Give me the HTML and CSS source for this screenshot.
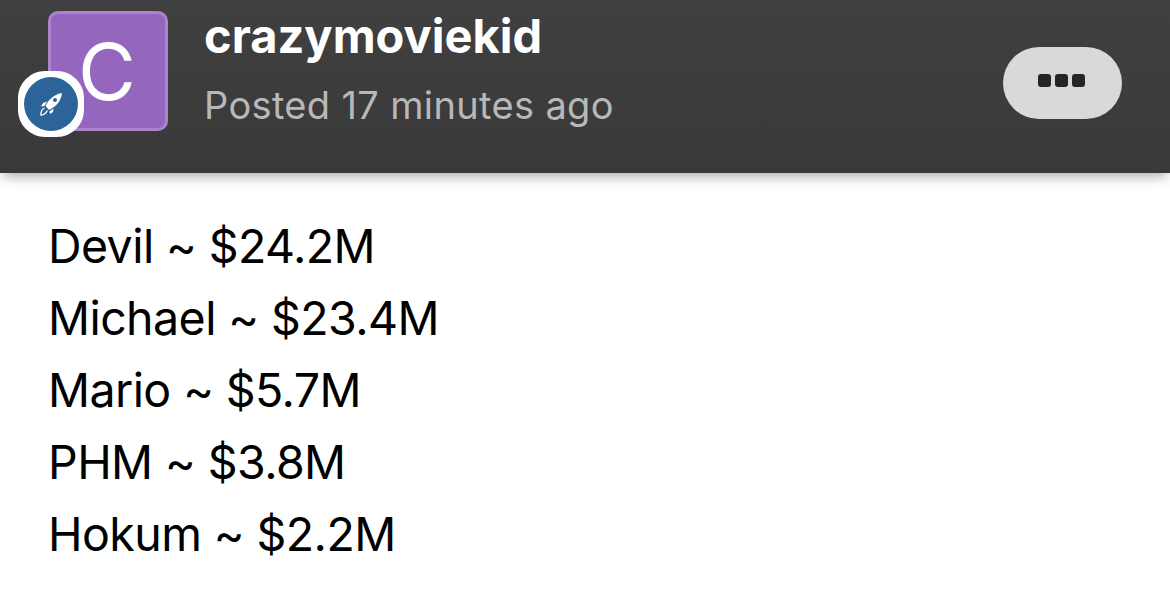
FILE: index.html
```html
<!DOCTYPE html>
<html lang="en">
<head>
<meta charset="utf-8">
<title>Post</title>
<link rel="stylesheet" href="styles.css">
</head>
<body>
<article class="post">
  <header class="post-header">
    <div class="avatar">
      <svg class="avatar-letter" viewBox="0 0 120 120"><text x="59" y="88.500" text-anchor="middle" textLength="58" lengthAdjust="spacingAndGlyphs">C</text></svg>
      <span class="badge">
        <svg viewBox="0 0 24 24"><path fill="#fff" d="M23 1C17 2 13 5 9 9.500L6.500 14L10 18L15 15C20 11 22 7 23 1Z"/><circle cx="16" cy="8" r="2" fill="#37628c"/><path fill="#fff" d="M8 9.500L4 11L2 14.500L5.500 14Z M14.500 16.500L10.500 19.500L11 22L14 20Z"/><path fill="none" stroke="#fff" stroke-width="1.300" d="M5.500 16Q1.500 18 2 23Q6 23 8.500 18.500"/></svg>
      </span>
    </div>
    <div class="meta">
      <div class="author">crazymoviekid</div>
      <div class="time">Posted 17 minutes ago</div>
    </div>
    <button class="more" aria-label="More options"><i></i><i></i><i></i></button>
  </header>
  <div class="post-body">
    <p>Devil ~ $24.2M</p>
    <p>Michael ~ $23.4M</p>
    <p>Mario ~ $5.7M</p>
    <p>PHM ~ $3.8M</p>
    <p>Hokum ~ $2.2M</p>
  </div>
</article>
</body>
</html>
```
FILE: styles.css
```css
* { box-sizing: border-box; }
body { margin: 0; background: #fff; font-family: Inter, "Liberation Sans", sans-serif; overflow: hidden; }
.post-header { display: flex; align-items: flex-start; height: 173px; padding: 11px 48px 0; background: linear-gradient(#404040, #393939); box-shadow: 0 6px 12px -3px rgba(0,0,0,.35); }
.avatar { position: relative; width: 120px; height: 120px; border: 3px solid #ac84cb; border-radius: 10px; background: #9566bd; flex: none; }
.avatar-letter { display: block; width: 120px; height: 120px; margin: -3px; fill: #fff; font: 79px Inter, sans-serif; }
.badge { position: absolute; left: -33px; top: 57px; width: 66px; height: 66px; border: 6px solid #fff; border-radius: 27px; background: #fff; display: flex; }
.badge::before { content: ""; position: absolute; inset: 0; border-radius: 50%; background: #2c6398; }
.badge svg { position: relative; width: 24px; height: 24px; margin: auto; }
.meta { margin-left: 36px; flex: 1; }
.author { color: #fff; font-size: 47px; font-weight: 700; line-height: 50px; }
.time { margin-top: 19px; color: #b8b8b8; font-size: 38px; font-weight: 400; line-height: 50px; letter-spacing: .35px; }
.more { display: flex; justify-content: center; gap: 4px; width: 119px; height: 72px; margin: 36px 0 0; padding: 27px 2px 0 0; border: 0; border-radius: 36px; background: #d9d9d9; }
.more i { width: 13px; height: 13px; border-radius: 3px; background: #252525; }
.post-body { padding: 37px 48px; font-size: 46.5px; letter-spacing: -.57px; line-height: 72px; color: #000; }
.post-body p { margin: 0; }
```
